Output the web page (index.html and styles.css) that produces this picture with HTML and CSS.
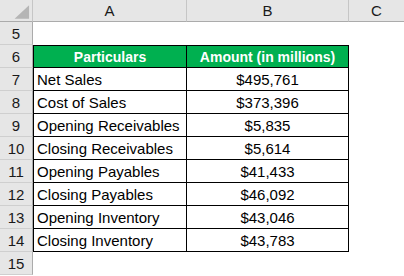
FILE: index.html
```html
<!DOCTYPE html>
<html>
<head>
<meta charset="utf-8">
<link rel="stylesheet" href="styles.css">
</head>
<body>
<div class="sheet">
  <div class="corner"><svg width="33" height="22" viewBox="0 0 33 22"><polygon points="30,5 30,19 15,19" fill="#b5b5b5"/></svg></div>
  <div class="colh">A</div>
  <div class="colh">B</div>
  <div class="colh last">C</div>

  <div class="rowh">5</div><div class="cell"></div><div class="cell"></div><div class="cell"></div>

  <div class="rowh">6</div>
  <div class="t head first top">Particulars</div>
  <div class="t head top">Amount (in millions)</div>
  <div class="cell"></div>

  <div class="rowh">7</div><div class="t first label">Net Sales</div><div class="t val">$495,761</div><div class="cell"></div>
  <div class="rowh">8</div><div class="t first label">Cost of Sales</div><div class="t val">$373,396</div><div class="cell"></div>
  <div class="rowh">9</div><div class="t first label">Opening Receivables</div><div class="t val">$5,835</div><div class="cell"></div>
  <div class="rowh">10</div><div class="t first label">Closing Receivables</div><div class="t val">$5,614</div><div class="cell"></div>
  <div class="rowh">11</div><div class="t first label">Opening Payables</div><div class="t val">$41,433</div><div class="cell"></div>
  <div class="rowh">12</div><div class="t first label">Closing Payables</div><div class="t val">$46,092</div><div class="cell"></div>
  <div class="rowh">13</div><div class="t first label">Opening Inventory</div><div class="t val">$43,046</div><div class="cell"></div>
  <div class="rowh">14</div><div class="t first label">Closing Inventory</div><div class="t val">$43,783</div><div class="cell"></div>

  <div class="rowh">15</div><div class="cell"></div><div class="cell"></div><div class="cell"></div>
</div>
</body>
</html>
```

FILE: styles.css
```css
html, body {
  margin: 0;
  padding: 0;
  background: #ffffff;
}
.sheet {
  display: grid;
  grid-template-columns: 33px 154px 162px 55px;
  grid-template-rows: 22px repeat(11, 23px);
  width: 404px;
  font-family: "Liberation Sans", Arial, sans-serif;
  font-size: 15px;
  color: #000;
}
.sheet > div {
  box-sizing: border-box;
  display: flex;
  align-items: center;
  white-space: nowrap;
  overflow: hidden;
}
.corner {
  background: #e6e6e6;
  border-right: 1px solid #c6c6c6;
  border-bottom: 1px solid #ababab;
  align-items: stretch !important;
}
.corner svg { display: block; }
.colh {
  background: #e6e6e6;
  border-right: 1px solid #c6c6c6;
  border-bottom: 1px solid #ababab;
  justify-content: center;
  font-size: 15px;
  color: #1a1a1a;
}
.colh.last { border-right: none; }
.rowh {
  background: #e6e6e6;
  border-right: 1px solid #ababab;
  border-bottom: 1px solid #cfcfcf;
  justify-content: center;
  color: #1a1a1a;
}
.cell { background: #fff; }
.t {
  background: #fff;
  border-right: 1px solid #000;
  border-bottom: 1px solid #000;
}
.t.first { border-left: 1px solid #000; }
.t.top { border-top: 1px solid #000; }
.head {
  background: #00b050 !important;
  color: #fff;
  font-weight: bold;
  font-size: 14px;
  justify-content: center;
}
.label { padding-left: 3px; }
.val { justify-content: center; }
```
